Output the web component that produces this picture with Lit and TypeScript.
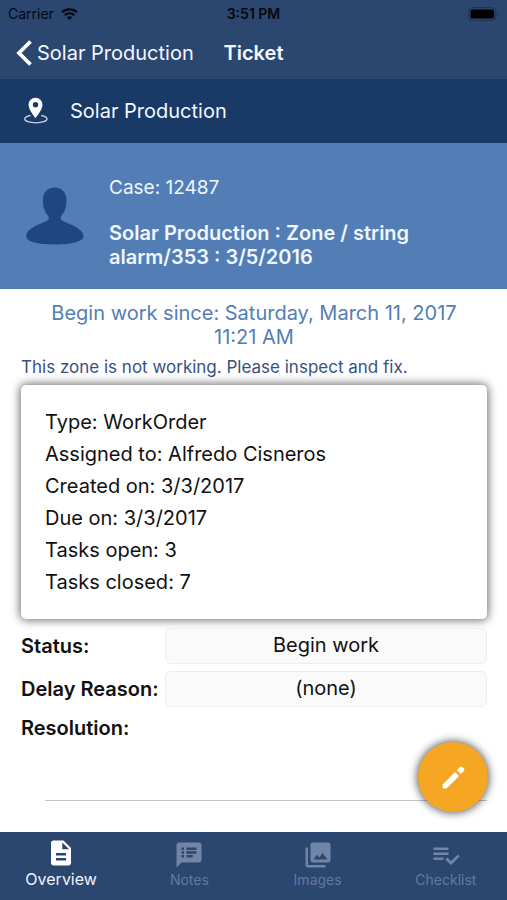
import { LitElement, html, css, svg } from "lit";
import { customElement, property, state } from "lit/decorators.js";
import { classMap } from "lit/directives/class-map.js";

const tabs = [
  {
    label: "Overview",
    icon: svg`<path d="M14 2H6c-1.1 0-1.99.9-1.99 2L4 20c0 1.1.89 2 1.99 2H18c1.1 0 2-.9 2-2V8l-6-6zm2 16H8v-2h8v2zm0-4H8v-2h8v2zm-3-5V3.5L18.5 9H13z"/>`,
  },
  {
    label: "Notes",
    icon: svg`<path d="M20 2H4c-1.1 0-1.99.9-1.99 2L2 22l4-4h14c1.1 0 2-.9 2-2V4c0-1.1-.9-2-2-2zM8 14H6v-2h2v2zm0-3H6V9h2v2zm0-3H6V6h2v2zm7 6h-5v-2h5v2zm3-3h-8V9h8v2zm0-3h-8V6h8v2z"/>`,
  },
  {
    label: "Images",
    icon: svg`<path d="M22 16V4a2 2 0 0 0-2-2H8a2 2 0 0 0-2 2v12a2 2 0 0 0 2 2h12a2 2 0 0 0 2-2zM8.500 15.500l2.600-3.700 1.900 2.200 2.700-3.600 3.800 5.100zM2 6v14a2 2 0 0 0 2 2h14v-2H4V6z"/>`,
  },
  {
    label: "Checklist",
    icon: svg`<path d="M14 10H2v2h12v-2zm0-4H2v2h12V6zM2 16h8v-2H2v2zm19.5-4.5L23 13l-6.99 7-4.51-4.5L13 14l3.01 3 5.49-5.5z"/>`,
  },
];

const details = [
  ["Type", "WorkOrder"],
  ["Assigned to", "Alfredo Cisneros"],
  ["Created on", "3/3/2017"],
  ["Due on", "3/3/2017"],
  ["Tasks open", "3"],
  ["Tasks closed", "7"],
];

@customElement("ticket-header")
class TicketHeader extends LitElement {
  static styles = css`
    :host { display: block; background: #2b466f; color: #f4f8ff; }
    .status {
      display: grid; grid-template-columns: 1fr auto 1fr; align-items: center;
      height: 27px; padding: 0 8px; color: #05080e; font-size: 14px;
    }
    .carrier { display: flex; align-items: center; gap: 7px; }
    .time { font-weight: 600; }
    .battery { justify-self: end; }
    .nav {
      display: grid; grid-template-columns: 1fr auto 1fr; align-items: center;
      height: 52px; padding: 0 16px;
    }
    .back {
      display: flex; align-items: center; gap: 5px; color: inherit;
      text-decoration: none; font-size: 20px; line-height: 24px; white-space: nowrap;
    }
    .title { margin: 0; font-size: 20px; line-height: 24px; font-weight: 600; }
    .site {
      display: flex; align-items: center; gap: 22px; height: 64px;
      padding: 0 24px; background: #193966; font-size: 20px;
    }
    svg { display: block; flex: none; }
  `;
  render() {
    return html`
      <div class="status">
        <span class="carrier">Carrier
          <svg width="17" height="12" viewBox="0 0 17 12" fill="none" stroke="#05080e" stroke-width="2.2">
            <path d="M1 4.300C5.200.4 11.800.4 16 4.300"/>
            <path d="M3.700 7.100c2.700-2.500 6.900-2.500 9.600 0"/>
            <path d="M8.500 12 5.800 9.300c1.500-1.300 3.900-1.300 5.400 0z" fill="#05080e" stroke="none"/>
          </svg>
        </span>
        <span class="time">3:51 PM</span>
        <svg class="battery" width="31" height="14" viewBox="0 0 31 14">
          <rect x=".7" y=".7" width="27" height="12.600" rx="3.500" fill="none" stroke="#1d3152"/>
          <rect x="2.500" y="2.500" width="23.500" height="9" rx="1.800" fill="#000"/>
          <path d="M29.300 4.800c1.600.8 1.600 3.600 0 4.400z" fill="#1d3152"/>
        </svg>
      </div>
      <div class="nav">
        <a class="back" href="#">
          <svg width="16" height="26" viewBox="0 0 16 26" fill="none" stroke="#fff" stroke-width="3.800">
            <path d="M14.500 1.500 3 13l11.500 11.500"/>
          </svg>Solar Production</a>
        <h1 class="title">Ticket</h1>
      </div>
      <div class="site">
        <svg width="24" height="28" viewBox="0 0 24 28">
          <path d="M6.500 18.500C2.500 19.300.7 20.600.7 22c0 2.200 5 3.800 11.100 3.800S23 24.200 23 22c0-1.400-1.800-2.700-5.800-3.500" fill="none" stroke="#c9d3e2" stroke-width="1.300"/>
          <path fill="#fff" fill-rule="evenodd" d="M11.500.8a7 7 0 0 0-7 7c0 5 7 13.400 7 13.400s7-8.400 7-13.400a7 7 0 0 0-7-7zm0 4.200a2.700 2.700 0 1 1 0 5.400 2.700 2.700 0 0 1 0-5.400z"/>
        </svg>
        <span>Solar Production</span>
      </div>
    `;
  }
}

@customElement("ticket-tabs")
class TicketTabs extends LitElement {
  @property({ type: Number }) active = 0;
  static styles = css`
    :host { display: block; overflow: hidden; background: #2b466f; }
    .bar { display: grid; grid-template-columns: repeat(4, 1fr); height: 68px; margin: 0 -3px; }
    .tab {
      display: flex; flex-direction: column; align-items: center; justify-content: flex-start;
      padding: 8px 0 0; border: 0; background: none; color: #64799d;
      font: 14px/20px Inter, sans-serif;
    }
    .current { padding-top: 6px; color: #eef4fd; font-size: 16px; line-height: 22px; }
    svg { display: block; width: 30px; height: 30px; fill: #7285a6; }
    .current svg { fill: #fff; }
  `;
  render() {
    return html`<nav class="bar">
      ${tabs.map((t, i) => html`
        <button class=${classMap({ tab: true, current: i === this.active })} @click=${() => (this.active = i)}>
          <svg viewBox="0 0 24 24" fill-rule="evenodd">${t.icon}</svg>${t.label}
        </button>`)}
    </nav>`;
  }
}

@customElement("app-root")
class AppRoot extends LitElement {
  @state() private resolution = "";
  static styles = css`
    :host {
      display: flex; flex-direction: column; min-height: 100vh; background: #fff;
      color: #111; font-family: Inter, "Liberation Sans", sans-serif; font-size: 20px; line-height: 24px;
    }
    .hero {
      display: flex; align-items: flex-start; gap: 25px; padding: 33px 60px 20px 26px;
      background: #527eb5; color: #f0f6ff;
    }
    .avatar { flex: none; display: block; margin-top: 11px; }
    .case { margin: 0 0 21px; font-size: 19px; }
    .subject { margin: 0; font-size: 20px; font-weight: 600; }
    .main { position: relative; flex: 1; padding: 12px 20px 31px 21px; }
    .since { margin: 0 30px 6px; text-align: center; color: #527eb5; }
    .note { margin: 0 0 6px; font-size: 17px; color: #38507f; }
    .card {
      margin: 0 0 9px; padding: 21px 24px; list-style: none; border-radius: 5px; background: #fff;
      box-shadow: 0 0 10px 1px rgba(0, 0, 0, 0.6); line-height: 32px;
    }
    .fields { display: grid; grid-template-columns: 144px 1fr; row-gap: 7px; align-items: center; }
    .label { display: block; font-weight: 600; white-space: nowrap; }
    .select {
      appearance: none; width: 100%; height: 36px; padding: 0 0 2px; border: 1px solid #eee;
      border-radius: 6px; background: #fafafa; color: #111; font: inherit; text-align-last: center;
    }
    .below { margin-top: 9px; }
    .entry { padding-left: 24px; }
    .textarea {
      display: block; box-sizing: border-box; width: 100%; height: 61px; padding: 8px 0; resize: none;
      border: 0; border-bottom: 1px solid #c4c4c4; background: none; color: #111; font: inherit; outline: none;
    }
    .fab {
      position: absolute; right: 19px; bottom: 20px; display: grid; place-items: center;
      width: 70px; height: 70px; padding: 0; border: 0; border-radius: 50%; background: #f5a623;
      box-shadow: 0 0 9px 1px rgba(0, 0, 0, 0.65);
    }
  `;
  render() {
    return html`
      <ticket-header></ticket-header>
      <section class="hero">
        <svg class="avatar" width="58" height="58" viewBox="0 0 58 58" fill="#1e4680">
          <path d="M28.700.5c7 0 11.800 5 11.800 12.500 0 7.500-2 12-5.300 16.200-1.400 1.800-.6 3.600 1.600 4.700C44 37.500 57.500 41 57.500 49.500c0 5-12 8-28.800 8S.2 54.500.2 49.500C.2 41 13.400 37.500 20.600 33.900c2.200-1.100 3-2.900 1.600-4.700C18.900 25 16.900 20.500 16.900 13 16.900 5.500 21.700.5 28.700.5z"/>
        </svg>
        <div>
          <p class="case">Case: 12487</p>
          <h2 class="subject">Solar Production : Zone / string alarm/353 : 3/5/2016</h2>
        </div>
      </section>
      <main class="main">
        <p class="since">Begin work since: Saturday, March 11, 2017 11:21 AM</p>
        <p class="note">This zone is not working. Please inspect and fix.</p>
        <ul class="card">
          ${details.map(([k, v]) => html`<li>${k}: ${v}</li>`)}
        </ul>
        <div class="fields">
          <label class="label" for="status">Status:</label>
          <select class="select" id="status"><option>Begin work</option></select>
          <label class="label" for="delay">Delay Reason:</label>
          <select class="select" id="delay"><option>(none)</option></select>
        </div>
        <label class="label below" for="resolution">Resolution:</label>
        <div class="entry">
          <textarea class="textarea" id="resolution" .value=${this.resolution}
            @input=${(e: Event) => (this.resolution = (e.target as HTMLTextAreaElement).value)}></textarea>
        </div>
        <button class="fab" aria-label="Edit">
          <svg width="29" height="29" viewBox="0 0 24 24" fill="#fff">
            <path d="M3 17.700V20a1 1 0 0 0 1 1h2.300L16.600 10.700l-3.300-3.300zM20.600 6.700a1.500 1.500 0 0 0 0-2.100l-1.200-1.200a1.500 1.500 0 0 0-2.100 0L14.800 5.900l3.300 3.300z"/>
          </svg>
        </button>
      </main>
      <ticket-tabs></ticket-tabs>
    `;
  }
}
